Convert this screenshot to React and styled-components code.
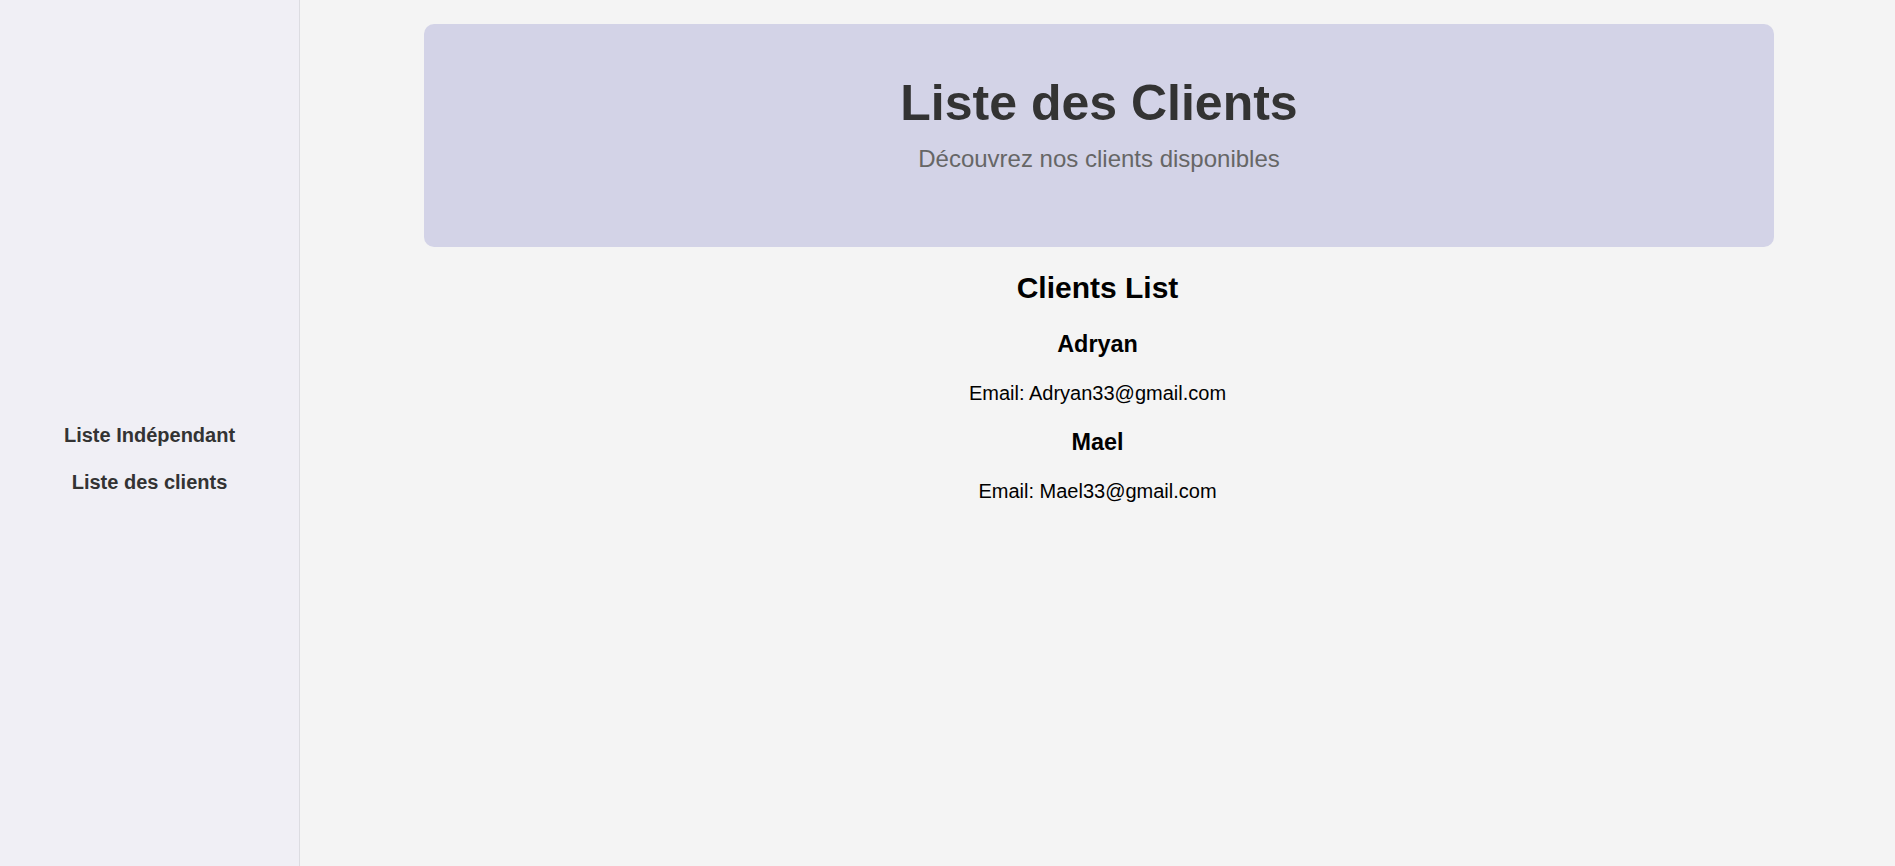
import React from "react";
import styled, { createGlobalStyle } from "styled-components";

const GlobalStyle = createGlobalStyle`
  html, body {
    margin: 0;
    padding: 0;
    background: #f4f4f4;
    font-family: "Liberation Sans", Arial, sans-serif;
    font-size: 20px;
  }
  * { box-sizing: border-box; }
`;

const Layout = styled.div`
  display: flex;
  min-height: 100vh;
  background: #f4f4f4;
`;

const Sidebar = styled.nav`
  width: 300px;
  flex-shrink: 0;
  background: #f0eff5;
  border-right: 1px solid #dcdce1;
  display: flex;
  flex-direction: column;
  justify-content: center;
  align-items: center;
  padding-top: 52px;
`;

const NavList = styled.ul`
  list-style: none;
  margin: 0;
  padding: 0;
  display: flex;
  flex-direction: column;
  align-items: center;
  gap: 24px;
`;

const NavLink = styled.a`
  display: block;
  color: #333;
  font-weight: bold;
  font-size: 20px;
  line-height: 23px;
  text-decoration: none;
  cursor: pointer;
`;

const Main = styled.main`
  flex: 1;
  display: flex;
  flex-direction: column;
  align-items: center;
  padding-top: 24px;
`;

const Hero = styled.header`
  width: 1350px;
  background: #d3d3e7;
  border-radius: 10px;
  padding: 50px 20px;
  text-align: center;
  margin-left: 3px;
`;

const HeroTitle = styled.h1`
  margin: 0 0 13px;
  font-size: 50px;
  font-weight: bold;
  color: #333;
`;

const HeroSubtitle = styled.p`
  margin: 0 0 24px;
  font-size: 24px;
  color: #666;
`;

const ClientsSection = styled.section`
  text-align: center;
  color: #000;
`;

const SectionTitle = styled.h2`
  font-size: 30px;
  margin: 24px 0 26px;
`;

const ClientName = styled.h3`
  font-size: 23.4px;
  margin: 24px 0;
`;

const ClientEmail = styled.p`
  font-size: 20px;
  margin: 24px 0;
`;

const clients = [
  { name: "Adryan", email: "Adryan33@gmail.com" },
  { name: "Mael", email: "Mael33@gmail.com" },
];

export default function App() {
  return (
    <>
      <GlobalStyle />
      <Layout>
        <Sidebar>
          <NavList>
            <li><NavLink>Liste Indépendant</NavLink></li>
            <li><NavLink>Liste des clients</NavLink></li>
          </NavList>
        </Sidebar>
        <Main>
          <Hero>
            <HeroTitle>Liste des Clients</HeroTitle>
            <HeroSubtitle>Découvrez nos clients disponibles</HeroSubtitle>
          </Hero>
          <ClientsSection>
            <SectionTitle>Clients List</SectionTitle>
            {clients.map((c) => (
              <div key={c.name}>
                <ClientName>{c.name}</ClientName>
                <ClientEmail>Email: {c.email}</ClientEmail>
              </div>
            ))}
          </ClientsSection>
        </Main>
      </Layout>
    </>
  );
}
